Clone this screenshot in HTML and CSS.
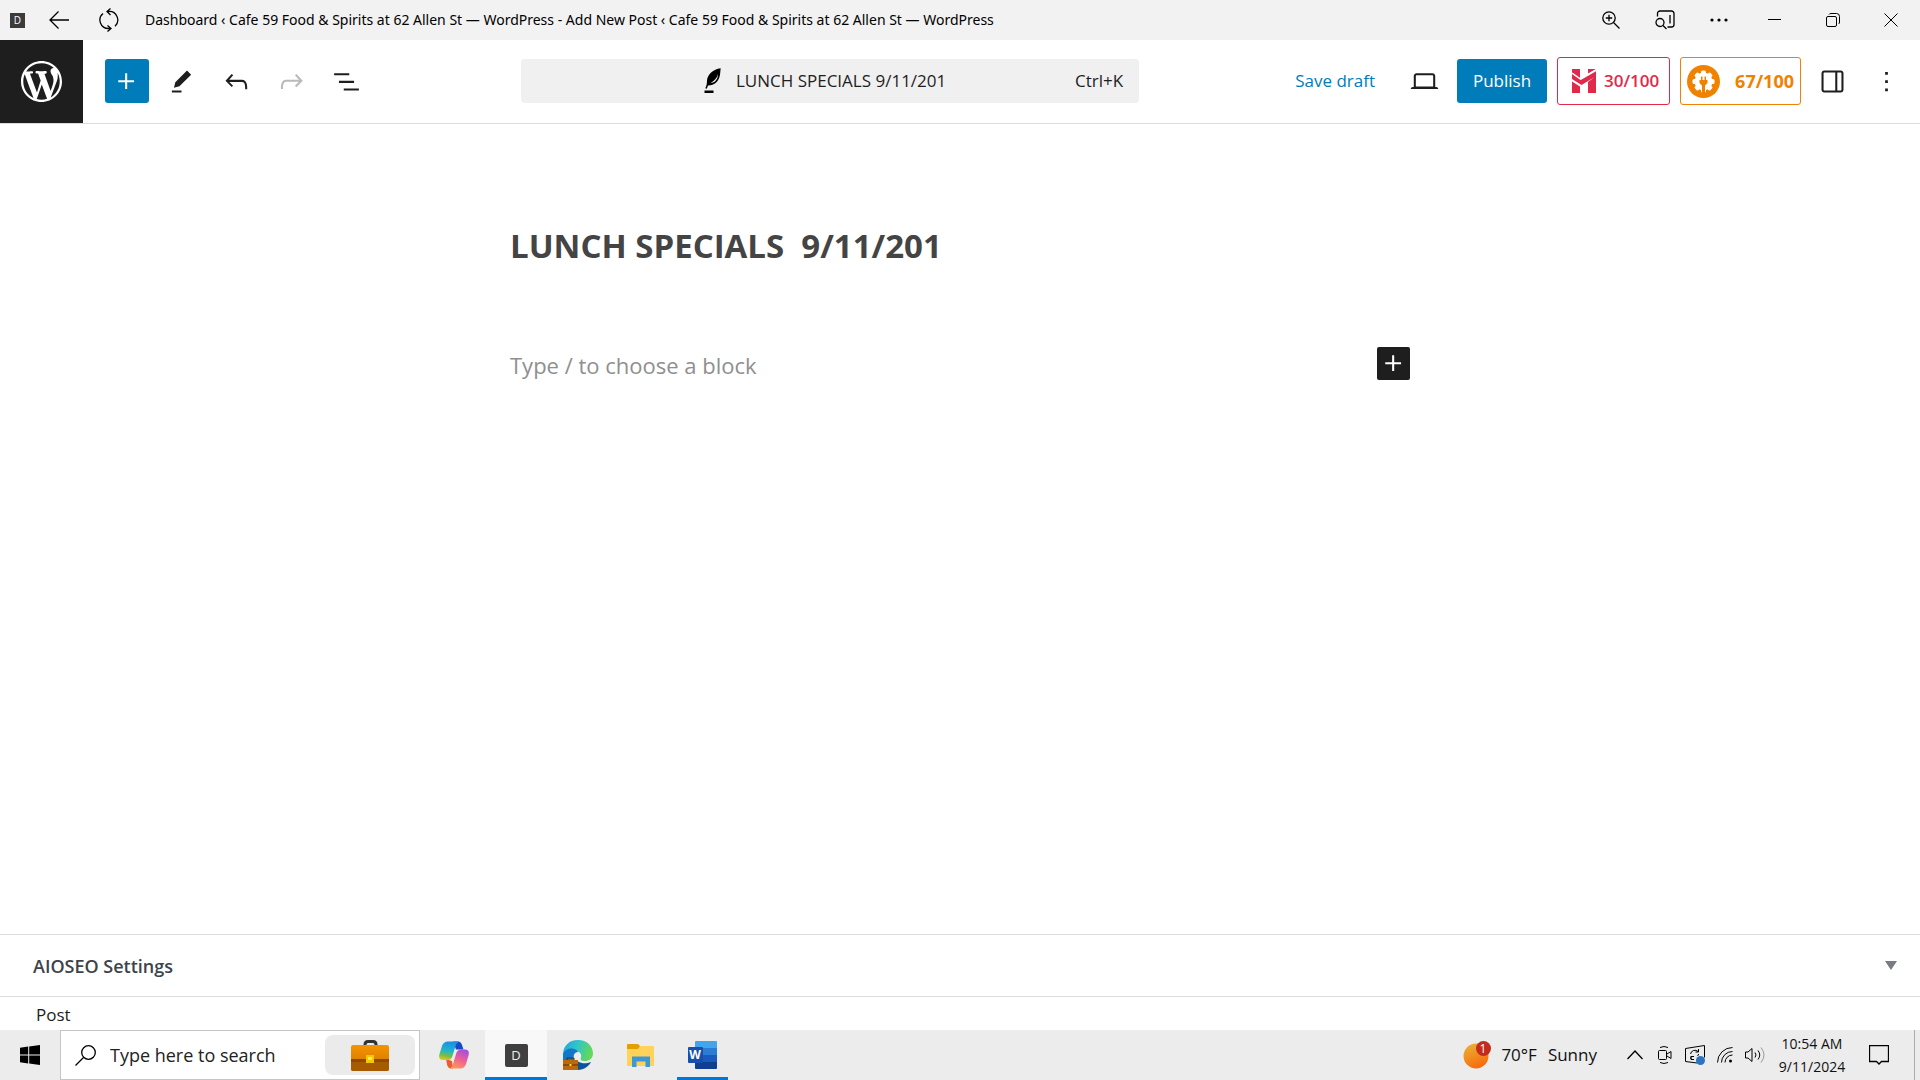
FILE: index.html
```html
<!DOCTYPE html>
<html lang="en">
<head>
<meta charset="utf-8">
<meta name="viewport" content="width=device-width, initial-scale=1">
<title>Add New Post ‹ Cafe 59 Food &amp; Spirits at 62 Allen St — WordPress</title>
<link rel="stylesheet" href="styles.css">
</head>
<body>
<header class="titlebar">
  <span class="app-badge">D</span>
  <button class="bare back" aria-label="Back"><svg width="20" height="18" viewBox="0 0 20 18" class="line heavy"><path d="M20 9H1M9.500 .5L1 9l8.500 8.500"/></svg></button>
  <button class="bare reload" aria-label="Refresh"><svg width="22" height="24" viewBox="0 0 22 24" class="line heavy"><path d="M9 3.500h1.500a8.500 8.500 0 0 1 6.500 14.700M12.500 .5L9 3.500l3.500 3.500M5 5.500a8.500 8.500 0 0 0 5.500 15h2M9.500 17.500l3.500 3-3.500 3"/></svg></button>
  <span class="window-title">Dashboard ‹ Cafe 59 Food &amp; Spirits at 62 Allen St — WordPress - Add New Post ‹ Cafe 59 Food &amp; Spirits at 62 Allen St — WordPress</span>
  <div class="window-tools">
    <button class="bare" aria-label="Zoom"><svg width="18" height="18" viewBox="0 0 18 18" class="line heavy"><circle cx="7" cy="7" r="6.200"/><path d="M11.500 11.500l6 6M7 3.800v6.400M3.800 7h6.400"/></svg></button>
    <button class="bare" aria-label="Search in sidebar"><svg width="20" height="20" viewBox="0 0 20 20" class="line heavy"><path d="M2.500 6.500V3.500a2.500 2.500 0 0 1 2.500-2.500h11.500a2.500 2.500 0 0 1 2.500 2.500v11a2.500 2.500 0 0 1-2.500 2.500H12.500M15 5v8.500"/><circle cx="5" cy="12.500" r="4"/><path d="M8 15.500l3.500 3.500"/></svg></button>
    <button class="bare" aria-label="Settings and more"><svg width="18" height="4" viewBox="0 0 18 4"><circle cx="2" cy="2" r="1.600"/><circle cx="9" cy="2" r="1.600"/><circle cx="16" cy="2" r="1.600"/></svg></button>
    <button class="bare" aria-label="Minimize"><svg width="14" height="2" viewBox="0 0 14 2"><path d="M0 0h13v1H0z"/></svg></button>
    <button class="bare" aria-label="Restore"><svg width="14" height="14" viewBox="0 0 14 14" class="line"><rect x=".5" y="3.500" width="10" height="10" rx="1.500"/><path d="M3 1.500Q3.500 .5 5 .5h5.500a3 3 0 0 1 3 3V9q0 1.500-1 2"/></svg></button>
    <button class="bare" aria-label="Close"><svg width="14" height="14" viewBox="0 0 14 14" class="line"><path d="M.5 .5l13 13M13.500 .5l-13 13"/></svg></button>
  </div>
</header>

<div class="toolbar">
  <a class="wp-home" href="#" aria-label="View Posts"><svg width="41" height="41" viewBox="0 0 20 20"><path d="M20 10c0-5.510-4.490-10-10-10C4.480 0 0 4.490 0 10c0 5.520 4.480 10 10 10 5.510 0 10-4.480 10-10zM7.780 15.370L4.370 6.220c.55-.02 1.170-.08 1.170-.08.5-.06.44-1.130-.06-1.110 0 0-1.450.11-2.370.11-.18 0-.37 0-.58-.01C4.120 2.690 6.870 1.110 10 1.110c2.330 0 4.450.87 6.050 2.340-.68-.11-1.650.39-1.650 1.580 0 .74.45 1.360.9 2.100.35.610.55 1.360.55 2.460 0 1.490-1.400 5-1.400 5l-3.030-8.370c.54-.02.82-.17.82-.17.5-.05.44-1.250-.06-1.220 0 0-1.440.12-2.380.12-.87 0-2.330-.12-2.330-.12-.5-.03-.56 1.200-.06 1.220l.92.08 1.260 3.410zM17.410 10c.24-.64.74-1.870.43-4.250.7 1.290 1.050 2.710 1.050 4.250 0 3.290-1.730 6.240-4.400 7.780.97-2.590 1.940-5.200 2.920-7.780zM6.100 18.090C3.120 16.650 1.110 13.530 1.110 10c0-1.300.23-2.480.72-3.590C3.250 10.300 4.670 14.200 6.100 18.090zm4.030-6.630l2.580 6.980c-.86.29-1.760.45-2.710.45-.79 0-1.570-.11-2.290-.33.81-2.380 1.620-4.740 2.420-7.100z"/></svg></a>
  <div class="tools">
    <button class="tool primary" aria-label="Add block"><svg class="icon" viewBox="0 0 24 24"><path d="M11 12.500V17.500H12.500V12.500H17.500V11H12.500V6H11V11H6V12.500H11Z"/></svg></button>
    <button class="tool" aria-label="Tools"><svg class="icon" viewBox="0 0 24 24"><path d="m19 7-3-3-8.500 8.500-1 4 4-1L19 7Zm-7 11.500H5V20h7v-1.500Z"/></svg></button>
    <button class="tool" aria-label="Undo"><svg class="icon" viewBox="0 0 24 24"><path d="M18.300 11.700c-.6-.6-1.400-.9-2.300-.9H6.700l2.900-3.300-1.100-1-4.500 5L8.500 16l1-1-2.700-2.700H16c.5 0 .9.2 1.300.5 1 1 1 3.400 1 4.500v.3h1.500v-.2c0-1.500 0-4.300-1.500-5.700z"/></svg></button>
    <button class="tool" aria-label="Redo" disabled><svg class="icon" viewBox="0 0 24 24"><path d="M15.600 6.500l-1.100 1 2.900 3.300H8c-.9 0-1.700.3-2.300.9-1.400 1.500-1.400 4.200-1.400 5.600v.2h1.500v-.3c0-1.100 0-3.500 1-4.500.3-.3.7-.5 1.300-.5h9.200L14.500 15l1.100 1.100 4.600-4.600-4.600-5z"/></svg></button>
    <button class="tool" aria-label="Document Overview"><svg class="icon" viewBox="0 0 24 24"><path d="M3 6h11v1.500H3V6Zm3.500 5.500h11V13h-11v-1.500ZM21 17H10v1.500h11V17Z"/></svg></button>
  </div>
  <div class="center">
    <button class="command">
      <span class="command-title"><svg width="18" height="26" viewBox="0 0 18 26"><path fill-rule="evenodd" d="M16.700 .3C9 1.500 3.500 6.500 3 12.500c-.2 3 0 4.300-1.700 7.800l1.500.5 1.200-3.200c6 .2 10-3.500 11.600-9C16.500 5.500 16.200 3 16.700.3zM14 6.200c-.2 5-2.500 8.300-7.600 9C10.500 12.500 12.800 10 14 6.200zM.5 22.600h9V25h-9z"/></svg>LUNCH SPECIALS 9/11/201</span>
      <span class="shortcut">Ctrl+K</span>
    </button>
  </div>
  <div class="actions">
    <button class="save">Save draft</button>
    <button class="tool" aria-label="View"><svg class="icon" viewBox="0 0 24 24"><path d="M20.500 16h-.7V8c0-1.100-.9-2-2-2H6.200c-1.100 0-2 .9-2 2v8h-.7c-.8 0-1.500.7-1.500 1.500h20c0-.8-.7-1.500-1.500-1.500zM5.700 8c0-.3.2-.5.5-.5h11.600c.3 0 .5.2.5.5v7.600H5.700V8z"/></svg></button>
    <button class="publish">Publish</button>
    <button class="score headline"><svg width="24" height="24" viewBox="0 0 24 24"><path d="M0 0h8v9.500l1.500 1L24 2.200v5L9.500 16 0 10zM16 0h8l-8 4.800zM0 12.500l8 5v6.500H0zM16 13l8-6v17h-8z"/><path d="M0 3.500l9 5.500M0 19l8-2" fill="none"/><path d="M0 4l8.500 6L24 .8" class="seam"/></svg>30/100</button>
    <button class="score seo"><svg width="33" height="33" viewBox="0 0 33 33"><circle cx="16.500" cy="16.500" r="16.500" fill="#f18200"/><g fill="#fff"><circle cx="16.500" cy="16.500" r="9"/><rect x="14" y="5.500" width="5" height="22" rx="1.500"/><rect x="14" y="5.500" width="5" height="22" rx="1.500" transform="rotate(45 16.500 16.500)"/><rect x="14" y="5.500" width="5" height="22" rx="1.500" transform="rotate(90 16.500 16.500)"/><rect x="14" y="5.500" width="5" height="22" rx="1.500" transform="rotate(135 16.500 16.500)"/></g><path fill="#f18200" d="M14 11.500h1.500V15h2v-3.500H19V15h1.500v3l-2.500 2.500V29h-3v-8.500L12.500 18v-3H14z"/></svg>67/100</button>
    <button class="tool" aria-label="Settings"><svg class="icon" viewBox="0 0 24 24"><path d="M18 4H6c-1.100 0-2 .9-2 2v12c0 1.100.9 2 2 2h12c1.100 0 2-.9 2-2V6c0-1.100-.9-2-2-2zm-4 14.500H6c-.3 0-.5-.2-.5-.5V6c0-.3.2-.5.5-.5h8v13zm4.500-.5c0 .3-.2.5-.5.5h-2.500v-13H18c.3 0 .5.2.5.5v12z"/></svg></button>
    <button class="tool" aria-label="Options"><svg class="icon" viewBox="0 0 24 24"><path d="M13 19h-2v-2h2v2zm0-6h-2v-2h2v2zm0-6h-2V5h2v2z"/></svg></button>
  </div>
</div>

<main class="editor">
  <div class="post">
    <h1 class="post-title">LUNCH SPECIALS &nbsp;9/11/201</h1>
    <div class="block-row">
      <p class="prompt">Type / to choose a block</p>
      <button class="inserter" aria-label="Add block"><svg class="icon" viewBox="0 0 24 24"><path d="M11 12.500V17.500H12.500V12.500H17.500V11H12.500V6H11V11H6V12.500H11Z"/></svg></button>
    </div>
  </div>
</main>

<section class="metabox">
  <h2 class="metabox-title">AIOSEO Settings</h2>
  <button class="bare" aria-label="Toggle panel"><svg width="12" height="9" viewBox="0 0 12 9"><path fill="#787c82" d="M0 0h12L6 9z"/></svg></button>
</section>
<footer class="crumbs">Post</footer>

<nav class="taskbar">
  <button class="bare start" aria-label="Start"><svg width="20" height="20" viewBox="0 0 20 20"><path d="M0 2.800l8.200-1.200v7.900H0zM9.200 1.400L20 0v9.500H9.200zM0 10.500h8.200v7.900L0 17.200zM9.200 10.500H20V20L9.200 18.600z"/></svg></button>
  <div class="search">
    <svg width="21" height="21" viewBox="0 0 21 21" class="line heavy"><circle cx="13.500" cy="7.500" r="6.800"/><path d="M8.500 12.500l-8 8"/></svg>
    <input class="search-input" type="text" aria-label="Search" placeholder="Type here to search">
    <button class="highlight" aria-label="Search highlights"><svg width="38" height="31" viewBox="0 0 38 31"><defs><linearGradient id="case" x2="0" y2="1"><stop offset="0" stop-color="#f79300"/><stop offset="1" stop-color="#c87400"/></linearGradient></defs><path d="M14 6V4.500Q14 1.500 17 1.500h5q3 0 3 3V6" fill="none" stroke="#333" stroke-width="3"/><rect y="5" width="38" height="26" rx="2" fill="url(#case)"/><path d="M0 19h38v10a2 2 0 0 1-2 2H2a2 2 0 0 1-2-2z" fill="#a65b00"/><path d="M0 19h38v3H0z" fill="#8d4a00"/><rect x="15" y="15" width="8" height="8" fill="#f3c800"/><rect x="17" y="17" width="4" height="3" fill="#ffe95c"/></svg></button>
  </div>
  <div class="apps">
    <button class="app" aria-label="Copilot"><svg width="30" height="28" viewBox="0 0 30 28"><defs><linearGradient id="cool" x1=".4" x2=".2" y2="1"><stop offset="0" stop-color="#1b8fe8"/><stop offset=".45" stop-color="#1eb5cf"/><stop offset=".75" stop-color="#75bd4a"/><stop offset="1" stop-color="#f0c514"/></linearGradient><linearGradient id="warm" x1=".7" x2=".3" y2="1"><stop offset="0" stop-color="#a44fe0"/><stop offset=".5" stop-color="#ee5f96"/><stop offset="1" stop-color="#ff9a52"/></linearGradient></defs><path d="M14 .5h5q3 0 4 3.500l1.500 4.500H17z" fill="#1c47c4"/><path d="M7 18l6 2 1 7.500h-2q-3 0-4-4z" fill="#ee5a36"/><path d="M9 .5h11q-2.500 1-3.500 4.500L13.500 15q-1.200 4-4.500 4H4q-5 0-3.500-6L3 5Q4.500 .5 9 .5z" fill="url(#cool)"/><path d="M21 27.500H10.500q2.500-1 3.500-4.500L17 13q1.200-4.500 5-4.500h4q5 0 3.500 6l-2.500 8.500q-1.500 4.500-6 4.500z" fill="url(#warm)"/></svg></button>
    <button class="app active" aria-label="Dashboard"><span class="app-tile">D</span></button>
    <button class="app" aria-label="Microsoft Edge"><svg width="30" height="30" viewBox="0 0 30 30"><defs><linearGradient id="wave" x2="1" y2=".3"><stop offset="0" stop-color="#20a5df"/><stop offset=".5" stop-color="#32c5c7"/><stop offset="1" stop-color="#63d957"/></linearGradient></defs><path d="M0 15C0 6 6 0 15 0s15 6 15 13.500c0 5-4 7.500-8 7.500-4 0-5-1.500-4-3.500C19 15 17 11.500 14 11.500c-4 0-6 4-5 9L0 25z" fill="url(#wave)"/><path d="M0 14C2 8.500 9 7 14 10.500l1 1.500c-4 0-5 4-4 8.500L0 26z" fill="#1177c9"/><path d="M15 21.500c4 2.500 9 2 13 .5-2 4-7 8-13 8z" fill="#0b559d"/><rect y="20" width="15" height="10" fill="#b96a0c"/><path d="M0 24h15v2H0z" fill="#8d4a00"/><path d="M4 20v-2h7v2" fill="none" stroke="#3b3324"/><path d="M6.500 24h2v2h-2z" fill="#ffd633"/></svg></button>
    <button class="app" aria-label="File Explorer"><svg width="27" height="23" viewBox="0 0 27 23"><path d="M0 1q0-1 1-1h10l2 2-1 3H0z" fill="#e3a002"/><path d="M0 5h11l2.500-3H26q1 0 1 1v19H0z" fill="#ffd35a"/><path d="M5 12.500h18V23h-4.500v-5.500h-9V23H5z" fill="#3f97d6"/></svg></button>
    <button class="app running" aria-label="Word"><svg width="29" height="28" viewBox="0 0 29 28"><path d="M8 0h20q1 0 1 1v6H7V1q0-1 1-1z" fill="#41a5ee"/><path d="M7 7h22v7H7z" fill="#2b7cd3"/><path d="M7 14h22v7H7z" fill="#185abd"/><path d="M7 21h22v6q0 1-1 1H8q-1 0-1-1z" fill="#103f91"/><rect y="6" width="15" height="16" rx="1" fill="#174fae"/><text x="7" y="18" class="word-letter">W</text></svg></button>
  </div>
  <div class="tray">
    <button class="bare weather"><svg width="28" height="28" viewBox="0 0 28 28"><defs><linearGradient id="sun" x1=".2" x2=".6" y2="1"><stop offset="0" stop-color="#e9b137"/><stop offset="1" stop-color="#f9690a"/></linearGradient></defs><circle cx="13" cy="15" r="12.500" fill="url(#sun)"/><circle cx="20.500" cy="7.500" r="7.500" fill="#c42b1c"/><text x="20" y="12" class="count">1</text></svg><span>70°F</span><span class="sky">Sunny</span></button>
    <button class="bare chevron" aria-label="Show hidden icons"><svg width="16" height="10" viewBox="0 0 16 10" class="line heavy"><path d="M.5 9L8 1l7.500 8"/></svg></button>
    <button class="bare" aria-label="Meet Now"><svg width="14" height="18" viewBox="0 0 14 18" class="line"><rect x=".5" y="4.500" width="8" height="9" rx="1"/><path d="M9 8l4-2.500v7L9 10M2 1.500q4-2 8 0M2 16.500q4 2 8 0"/></svg></button>
    <button class="bare" aria-label="Windows Update"><svg width="20" height="20" viewBox="0 0 20 20" class="line"><path d="M12 18L.5 16.500v-13l19-3v12M5.500 9a4.500 4.500 0 0 1 7.500-2.500M13.500 4v3h-3M9 14.500H6v-3M6 14q-.5-1 0-2.500h3M13.500 9q0 1-1 2"/><circle cx="15.500" cy="15.500" r="4.500" fill="#2b74c0" stroke="none"/></svg></button>
    <button class="bare" aria-label="Network"><svg width="16" height="16" viewBox="0 0 16 16" class="line"><path d="M.5 15.500A15 15 0 0 1 15.500 .5M4.500 15.500A11 11 0 0 1 15.500 4.500M8 15.500A7.500 7.500 0 0 1 15.500 8"/><circle cx="13.500" cy="14" r="1.500" fill="#000" stroke="none"/></svg></button>
    <button class="bare" aria-label="Volume"><svg width="20" height="18" viewBox="0 0 20 18" class="line"><path d="M.5 6v6H3l4 3.500v-13L3 6zM10 6.500q2 2.500 0 5M13 4.500q3.500 4.500 0 9"/><path d="M16 1.500q6 7.500 0 15" stroke="#999"/></svg></button>
    <button class="bare clock"><span>10:54 AM</span><span>9/11/2024</span></button>
    <button class="bare notices" aria-label="Notifications"><svg width="20" height="20" viewBox="0 0 20 20" class="line heavy"><path d="M.5 .5h19v16h-7L10 19l-2.500-2.500h-7z"/></svg></button>
    <button class="desktop" aria-label="Show desktop"></button>
  </div>
</nav>
</body>
</html>
```
FILE: styles.css
```css
* { box-sizing: border-box; }

body {
  margin: 0;
  min-height: 100vh;
  display: flex;
  flex-direction: column;
  background: #fff;
  color: #1e1e1e;
  font: 17px/24px "Open Sans", "Noto Sans", sans-serif;
}

button {
  margin: 0;
  padding: 0;
  border: 0;
  background: none;
  color: inherit;
  font: inherit;
  white-space: nowrap;
}

svg { display: block; flex: none; }
.line { fill: none; stroke: #000; stroke-width: 1; }
.heavy { stroke-width: 1.3; }
.bare { display: flex; align-items: center; justify-content: center; }

/* Window title bar */
.titlebar {
  height: 40px;
  flex: none;
  display: flex;
  align-items: center;
  padding-left: 10px;
  background: #f2f2f2;
  color: #000;
  font-family: "Noto Sans", sans-serif;
  font-size: 14px;
}
.app-badge {
  width: 15px;
  height: 15px;
  background: #3b3b3b;
  color: #fff;
  font: 10px/15px "Open Sans", sans-serif;
  text-align: center;
}
.back { width: 68px; }
.reload { width: 32px; }
.window-title { flex: 1; padding-left: 20px; white-space: nowrap; overflow: hidden; }
.window-tools { display: flex; }
.window-tools .bare { width: 58px; height: 40px; }
.window-tools .bare:nth-child(-n+3) { width: 54px; }

/* Editor toolbar */
.toolbar {
  height: 84px;
  flex: none;
  display: flex;
  align-items: center;
  border-bottom: 1px solid #ddd;
}
.wp-home {
  width: 83px;
  height: 83px;
  display: flex;
  align-items: center;
  justify-content: center;
  background: #1e1e1e;
  fill: #fff;
}
.tools { display: flex; gap: 11px; padding: 0 0 1px 22px; }
.tool {
  width: 44px;
  height: 44px;
  display: flex;
  align-items: center;
  padding-left: 5px;
  border-radius: 3px;
}
.tool:disabled { opacity: .3; }
.icon { width: 33px; height: 33px; fill: #1e1e1e; }
.primary { background: #007cba; }
.primary .icon { fill: #fff; }
.center { flex: 1; display: flex; justify-content: center; padding: 0 12px 1px 8px; }
.command {
  flex: 0 1 618px;
  height: 44px;
  display: grid;
  grid-template-columns: 1fr auto 1fr;
  align-items: center;
  padding: 0 16px;
  border-radius: 4px;
  background: #f0f0f0;
}
.command-title { grid-column: 2; display: flex; align-items: center; gap: 14px; padding-right: 10px; }
.shortcut { justify-self: end; }
.actions { display: flex; align-items: center; gap: 10px; padding: 0 11px 1px 0; }
.save { color: #007cba; margin-right: 18px; }
.publish {
  width: 90px;
  height: 44px;
  border-radius: 3px;
  background: #007cba;
  color: #fff;
}
.score {
  height: 48px;
  display: flex;
  align-items: center;
  border: 1px solid;
  border-radius: 3px;
  background: #fff;
  font-weight: 600;
}
.headline { width: 113px; padding-left: 14px; gap: 8px; color: #df2a4a; }
.headline svg { fill: #df2a4a; }
.seam { fill: none; stroke: #fff; stroke-width: 1.5; }
.seo {
  width: 121px;
  padding: 0 6px;
  justify-content: space-between;
  color: #f18200;
  font-size: 18px;
  font-weight: 700;
}

/* Writing canvas */
.editor { flex: 1; padding: 98px 40px 40px; }
.post { max-width: 900px; margin: 0 auto; }
.post-title {
  margin: 0;
  color: #444;
  font-size: 33px;
  line-height: 48px;
  font-weight: 700;
}
.block-row { display: flex; align-items: flex-start; justify-content: space-between; margin-top: 77px; }
.prompt { margin: 0; color: #8f8f8f; font-size: 22px; line-height: 36px; }
.inserter {
  width: 33px;
  height: 33px;
  border-radius: 2px;
  background: #1e1e1e;
}
.inserter .icon { fill: #fff; }

/* Panels under the canvas */
.metabox {
  height: 62px;
  flex: none;
  display: flex;
  align-items: center;
  justify-content: space-between;
  padding: 0 23px 0 33px;
  border-top: 1px solid #ddd;
}
.metabox-title { margin: 0; color: #3c434a; font-size: 18px; font-weight: 600; }
.crumbs {
  height: 34px;
  flex: none;
  padding: 6px 36px;
  border-top: 1px solid #ddd;
  font-size: 17px;
}

/* Windows taskbar */
.taskbar {
  height: 50px;
  flex: none;
  display: flex;
  background: #ececec;
  color: #111;
}
.start { width: 60px; }
.search {
  width: 360px;
  display: flex;
  align-items: center;
  gap: 14px;
  padding: 0 4px 0 14px;
  border: 1px solid #c6c6c6;
  background: #fff;
}
.search-input {
  flex: 1;
  min-width: 0;
  padding: 0;
  border: 0;
  outline: 0;
  background: none;
  color: #222;
  font: inherit;
  font-size: 18px;
}
.search-input::placeholder { color: #222; opacity: 1; }
.highlight {
  width: 90px;
  height: 40px;
  display: flex;
  align-items: center;
  justify-content: center;
  border-radius: 8px;
  background: #ebebeb;
}
.apps { display: flex; padding-left: 3px; }
.app { width: 62px; display: flex; align-items: center; justify-content: center; }
.active { background: #f8f8f8; box-shadow: inset 0 -3px #0078d7; }
.running { background: linear-gradient(#0078d7, #0078d7) center bottom / 51px 3px no-repeat; }
.app-tile {
  width: 23px;
  height: 23px;
  border-radius: 2px;
  background: #3f3f3f;
  color: #eee;
  font: 13px/23px "Open Sans", sans-serif;
}
.word-letter { fill: #fff; font: 700 12px "Open Sans", sans-serif; text-anchor: middle; }
.count { fill: #fff; font: 12px "Open Sans", sans-serif; text-anchor: middle; }
.tray { display: flex; margin-left: auto; }
.tray .bare { min-width: 30px; }
.weather { gap: 10px; }
.weather .sky { padding-left: 1px; }
.tray .chevron { margin-left: 23px; }
.clock { width: 84px; flex-direction: column; font-size: 14px; line-height: 23px; }
.tray .notices { width: 50px; }
.desktop { width: 6px; margin-left: 10px; border-left: 1px solid #aaa; }
```
